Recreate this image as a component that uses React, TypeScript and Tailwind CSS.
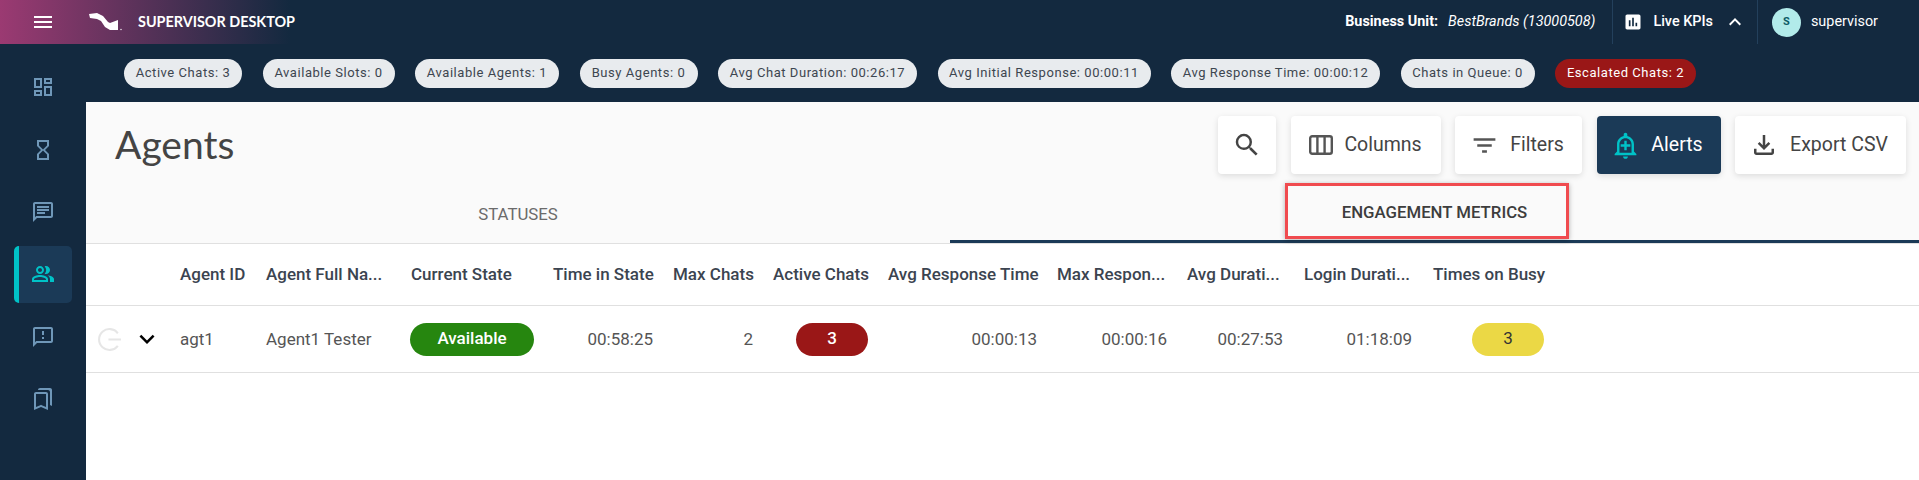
import {
  MdMenu,
  MdOutlineDashboard,
  MdOutlineHourglassEmpty,
  MdOutlineChat,
  MdOutlinePeopleAlt,
  MdOutlineSmsFailed,
  MdOutlineBookmarks,
  MdPoll,
  MdKeyboardArrowUp,
  MdKeyboardArrowDown,
  MdSearch,
  MdFilterList,
  MdOutlineAddAlert,
  MdOutlineFileDownload,
} from 'react-icons/md';

const kpis = [
  { label: 'Active Chats: 3', width: 'w-[118px]' },
  { label: 'Available Slots: 0', width: 'w-[132px]' },
  { label: 'Available Agents: 1', width: 'w-[144px]' },
  { label: 'Busy Agents: 0', width: 'w-[118px]' },
  { label: 'Avg Chat Duration: 00:26:17', width: 'w-[199px]' },
  { label: 'Avg Initial Response: 00:00:11', width: 'w-[213px]' },
  { label: 'Avg Response Time: 00:00:12', width: 'w-[209px]' },
  { label: 'Chats in Queue: 0', width: 'w-[134px]' },
];

function Logo() {
  return (
    <svg width="34" height="20" viewBox="0 0 34 20" className="ml-[34px]">
      <path d="M0 2 L8 1 L14 4 L19 10 L21 11 L29 8 L29 18 L21 18 L16 15 L12 9 L8 7 L1 6 Z" fill="#fff" />
      <circle cx="32" cy="17.5" r="0.7" fill="#fff" />
    </svg>
  );
}

function Header() {
  return (
    <header className="flex h-[44px] items-center justify-between bg-[linear-gradient(90deg,#9b3a72_0px,#13293f_290px)] text-white">
      <div className="flex items-center">
        <MdMenu className="ml-[31px] size-[24px]" />
        <Logo />
        <span className="ml-[15px] font-['Lato',sans-serif] text-[14.4px] font-bold">SUPERVISOR DESKTOP</span>
      </div>
      <div className="flex h-full items-center text-[14.4px]">
        <span className="font-bold">Business Unit:</span>
        <span className="ml-[10px] italic">BestBrands (13000508)</span>
        <div className="ml-[17px] flex h-full items-center border-l border-[#23405c] pl-[10px] pr-[10px]">
          <MdPoll className="size-[20px]" />
          <span className="ml-[10px] font-medium">Live KPIs</span>
          <MdKeyboardArrowUp className="ml-[10px] size-[24px]" />
        </div>
        <div className="flex h-full items-center border-l border-[#23405c] pl-[14px] pr-[41px]">
          <span className="flex size-[29px] items-center justify-center rounded-full bg-[#b2ebea] text-[11px] font-bold text-[#0f5c66]">S</span>
          <span className="ml-[10px]">supervisor</span>
        </div>
      </div>
    </header>
  );
}

function Sidebar() {
  const iconClass = 'size-[24px] text-[#6f97b8]';
  const slot = 'flex h-[62.4px] w-full items-center justify-center';
  return (
    <aside className="flex w-[86px] shrink-0 flex-col items-center pt-[12px]">
      <div className={slot}><MdOutlineDashboard className={iconClass} /></div>
      <div className={slot}><MdOutlineHourglassEmpty className={iconClass} /></div>
      <div className={slot}><MdOutlineChat className={iconClass} /></div>
      <div className={slot}>
        <div className="flex h-[57px] w-[58px] items-center justify-center rounded-[5px] border-l-[5px] border-[#00c2c7] bg-[#1b3a57] pr-[5px]">
          <MdOutlinePeopleAlt className="size-[24px] text-[#00c2c7]" />
        </div>
      </div>
      <div className={slot}><MdOutlineSmsFailed className={iconClass} /></div>
      <div className={slot}><MdOutlineBookmarks className={iconClass} /></div>
    </aside>
  );
}

function KpiStrip() {
  return (
    <div className="flex h-[58px] items-center gap-[20.5px] pl-[38px] text-[13px] tracking-[0.55px]">
      {kpis.map((kpi) => (
        <span key={kpi.label} className={`flex h-[29px] ${kpi.width} items-center justify-center rounded-full bg-[#e8ebee] text-[#3d4650]`}>
          {kpi.label}
        </span>
      ))}
      <span className="flex h-[29px] w-[141px] items-center justify-center rounded-full bg-[#9a1717] text-white">Escalated Chats: 2</span>
    </div>
  );
}

function ColumnsIcon() {
  return (
    <svg width="24" height="20" viewBox="0 0 24 20" fill="none" stroke="#555" strokeWidth="2.4">
      <rect x="1.2" y="1.2" width="21.6" height="17.6" rx="2" />
      <path d="M8.4 1v18M15.6 1v18" />
    </svg>
  );
}

function ToolButton({ icon, label, width, active }: { icon: React.ReactNode; label?: string; width: string; active?: boolean }) {
  return (
    <button className={`flex h-[58px] ${width} items-center justify-center gap-[11px] rounded-[4px] text-[19.5px] shadow-[0_2px_6px_rgba(0,0,0,0.12)] ${active ? 'bg-[#1b3a57] text-white' : 'bg-white text-[#444]'}`}>
      {icon}
      {label}
    </button>
  );
}

function Toolbar() {
  return (
    <div className="flex h-[72px] items-start justify-between pl-[29px] pr-[13px] pt-[14px]">
      <h1 className="font-['Lato',sans-serif] text-[39px] font-normal leading-[56px] text-[#444]">Agents</h1>
      <div className="flex gap-[14.5px]">
        <ToolButton width="w-[58px]" icon={<MdSearch className="size-[30px]" />} />
        <ToolButton width="w-[150px]" label="Columns" icon={<ColumnsIcon />} />
        <ToolButton width="w-[127px] pr-[3px]" label="Filters" icon={<MdFilterList className="size-[29px] text-[#555]" />} />
        <ToolButton width="w-[124px] pr-[3px]" label="Alerts" active icon={<MdOutlineAddAlert className="size-[29px] text-[#00c2c7]" />} />
        <ToolButton width="w-[171px] pr-[4px]" label="Export CSV" icon={<MdOutlineFileDownload className="size-[30px]" />} />
      </div>
    </div>
  );
}

function Tabs() {
  return (
    <div className="relative flex h-[70px] border-b border-[#e0e0e0] text-[16.8px]">
      <div className="flex w-[864px] items-center justify-center pt-[12px] text-[#6b6b6b]">STATUSES</div>
      <div className="flex flex-1 items-center justify-center border-b-[3px] border-[#1b3a57] pt-[12px] font-medium text-[#3d3d3d]">
        ENGAGEMENT METRICS
      </div>
      {/* red annotation drawn over the tab */}
      <div className="absolute left-[1199px] top-[9px] h-[56px] w-[284px] border-[3px] border-[#f04b4f] shadow-[0_1px_5px_rgba(0,0,0,0.3)]" />
    </div>
  );
}

const columns = 'grid grid-cols-[94px_86px_144px_143px_120px_100px_115px_169px_130px_117px_129px_131px] items-center';
const cell = 'pt-[2px] pr-[20px] text-right';

function AgentsTable() {
  return (
    <div className="flex-1 bg-white text-[17px]">
      <div className={`${columns} h-[62px] whitespace-nowrap border-b border-[#e0e0e0] font-medium text-[#3b4450]`}>
        <span />
        <span>Agent ID</span>
        <span>Agent Full Na...</span>
        <span className="pl-[1px]">Current State</span>
        <span className="pr-[20px] text-right">Time in State</span>
        <span className="pr-[20px] text-right">Max Chats</span>
        <span className="pr-[20px] text-right">Active Chats</span>
        <span className="pr-[20px] text-right">Avg Response Time</span>
        <span className="pr-[24px] text-right">Max Respon...</span>
        <span className="pr-[27px] text-right">Avg Durati...</span>
        <span className="pr-[26px] text-right">Login Durati...</span>
        <span className="pr-[20px] text-right">Times on Busy</span>
      </div>
      <div className={`${columns} h-[67px] border-b border-[#e0e0e0] text-[#555]`}>
        <div className="flex items-center pl-[11px]">
          <svg width="25" height="25" viewBox="0 0 24 24" fill="none" stroke="#e6e6e6" strokeWidth="2">
            <path d="M20 6a10 10 0 1 0 0 12M11 12h12" />
          </svg>
          <MdKeyboardArrowDown className="ml-[10px] size-[30px] text-black" />
        </div>
        <span className="pt-[2px]">agt1</span>
        <span className="pt-[2px]">Agent1 Tester</span>
        <span className="flex h-[33px] w-[124px] items-center justify-center rounded-full bg-[#26860f] font-medium text-white">Available</span>
        <span className={cell}>00:58:25</span>
        <span className={cell}>2</span>
        <div className="flex justify-end pr-[20px]">
          <span className="flex h-[33px] w-[72px] items-center justify-center rounded-full bg-[#9a1717] font-medium text-white">3</span>
        </div>
        <span className={cell}>00:00:13</span>
        <span className={cell}>00:00:16</span>
        <span className="pt-[2px] pr-[21px] text-right">00:27:53</span>
        <span className="pt-[2px] pr-[21px] text-right">01:18:09</span>
        <div className="flex justify-end pr-[20px]">
          <span className="flex h-[33px] w-[72px] items-center justify-center rounded-full bg-[#ebd845] text-[#333]">3</span>
        </div>
      </div>
    </div>
  );
}

export default function App() {
  return (
    <div className="flex h-[480px] w-[1919px] flex-col overflow-hidden bg-[#13293f] font-['Roboto',sans-serif]">
      <Header />
      <div className="flex flex-1">
        <Sidebar />
        <div className="flex min-w-0 flex-1 flex-col">
          <KpiStrip />
          <div className="flex flex-1 flex-col bg-[#fafafa]">
            <Toolbar />
            <Tabs />
            <AgentsTable />
          </div>
        </div>
      </div>
    </div>
  );
}
